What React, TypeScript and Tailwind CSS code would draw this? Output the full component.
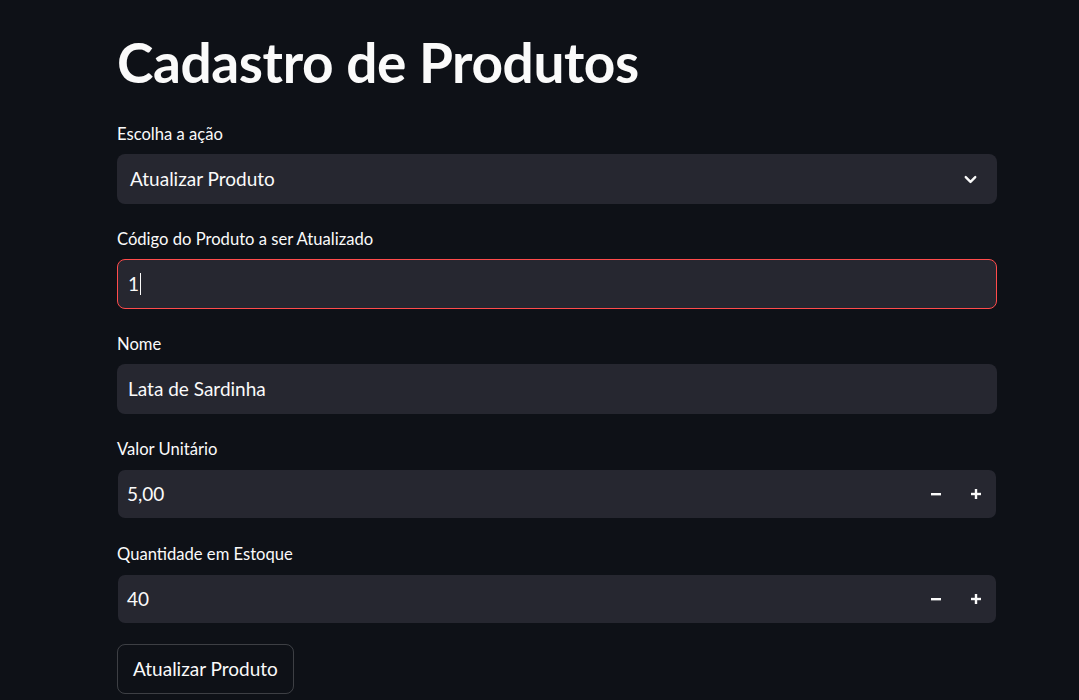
import { ChevronDown } from "lucide-react";

const font = { fontFamily: "Lato, 'Noto Sans', sans-serif" };

function Label({ text }: { text: string }) {
  return <div className="h-[30px] mb-[5px] flex items-center text-[16.6px] text-[#fafafa]">{text}</div>;
}

function NumberField({ label, value }: { label: string; value: string }) {
  return (
    <div>
      <Label text={label} />
      <div className="h-[50px] rounded-[8px] border border-transparent bg-[#262730] bg-clip-padding flex items-center">
        <span className="flex-1 pl-[9px] text-[19px] text-[#fafafa]">{value}</span>
        <button className="w-[40px] h-full flex items-center justify-center text-[#fafafa]">
          <svg width="12" height="12" viewBox="0 0 12 12"><rect x="1" y="5" width="10" height="2.4" fill="currentColor" /></svg>
        </button>
        <button className="w-[40px] h-full flex items-center justify-center text-[#fafafa]">
          <svg width="12" height="12" viewBox="0 0 12 12">
            <rect x="1" y="4.8" width="10" height="2.4" fill="currentColor" />
            <rect x="4.8" y="1" width="2.4" height="10" fill="currentColor" />
          </svg>
        </button>
      </div>
    </div>
  );
}

export default function App() {
  return (
    <div className="min-h-screen bg-[#0e1117] text-[#fafafa]" style={font}>
      <div className="w-[880px] ml-[117px] pt-[29px]">
        <h1 className="text-[55px] font-bold leading-[66px] tracking-[-0.4px] mb-[24px]">Cadastro de Produtos</h1>

        <div className="flex flex-col gap-[20px]">
          {/* Selectbox */}
          <div>
            <Label text="Escolha a ação" />
            <div className="h-[50px] rounded-[8px] bg-[#262730] flex items-center justify-between pl-[13px] pr-[17px]">
              <span className="text-[19px]">Atualizar Produto</span>
              <ChevronDown className="w-[19px] h-[19px]" strokeWidth={3} />
            </div>
          </div>

          {/* Código */}
          <div>
            <Label text="Código do Produto a ser Atualizado" />
            <div className="h-[50px] rounded-[8px] border border-[#ff4b4b] bg-[#262730] flex items-center pl-[10px]">
              <span className="text-[19px]">1</span>
              <span className="w-[1px] h-[22px] bg-[#fafafa] ml-[1px]" />
            </div>
          </div>

          {/* Nome */}
          <div>
            <Label text="Nome" />
            <div className="h-[50px] rounded-[8px] border border-transparent bg-[#262730] flex items-center pl-[10px]">
              <span className="text-[19px]">Lata de Sardinha</span>
            </div>
          </div>

          <NumberField label="Valor Unitário" value="5,00" />
          <NumberField label="Quantidade em Estoque" value="40" />

          <div>
            <button className="h-[50px] px-[15px] rounded-[8px] border border-[rgba(250,250,250,0.2)] text-[19px] text-[#fafafa]">
              Atualizar Produto
            </button>
          </div>
        </div>
      </div>
    </div>
  );
}
